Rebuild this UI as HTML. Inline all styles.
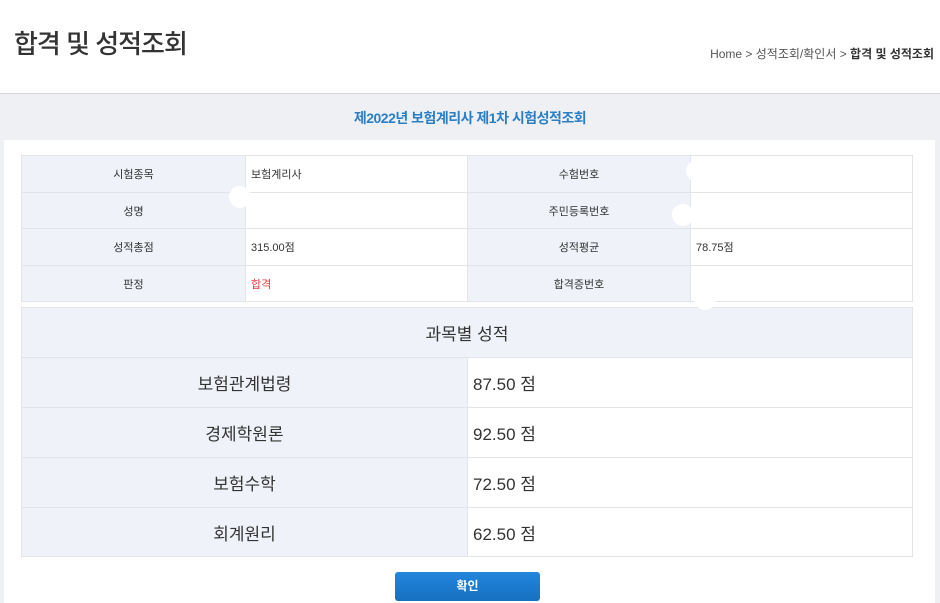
<!DOCTYPE html>
<html><head><meta charset="utf-8"><style>
*{margin:0;padding:0;box-sizing:border-box}
body{width:940px;height:603px;overflow:hidden;background:#fff;font-family:"Liberation Sans","Noto Sans CJK KR",sans-serif;color:#333;position:relative}
.a{position:absolute}
h1{position:absolute;left:14px;top:24px;font-size:26px;font-weight:500;color:#333;letter-spacing:-1px}
.bc{position:absolute;right:6px;top:45px;font-size:12px;color:#555}
.band{position:absolute;left:0;top:93px;width:940px;height:510px;background:#eef0f3;border-top:1px solid #d8d8d8}
.title{position:absolute;left:0;width:940px;top:108px;text-align:center;font-size:14px;font-weight:bold;color:#2a7fc6;letter-spacing:-0.5px}
.panel{position:absolute;left:4px;top:140px;width:931px;height:463px;background:#fff}
table{border-collapse:collapse;position:absolute;left:21px;width:892px}
td{border:1px solid #e2e4e8;font-size:11px}
td.l{background:#eff2f8;text-align:center}
td.v{padding-left:5px;background:#fff}
.t2 td{font-size:17px}
.t2 td.l{font-size:17px}
.btn{position:absolute;left:395px;top:572px;width:145px;height:29px;background:linear-gradient(#2486dc,#1570c0);border-radius:3px;color:#fff;font-size:12px;font-weight:bold;text-align:center;line-height:29px}
.dot{position:absolute;width:22px;height:22px;border-radius:50%;background:#fff}
</style></head><body>
<h1>합격 및 성적조회</h1>
<div class="bc">Home &gt; 성적조회/확인서 &gt; <b style="color:#333">합격 및 성적조회</b></div>
<div class="band"></div>
<div class="title">제2022년 보험계리사 제1차 시험성적조회</div>
<div class="panel"></div>
<table style="top:155px">
<tr style="height:37px"><td class="l" style="width:224px">시험종목</td><td class="v" style="width:222px">보험계리사</td><td class="l" style="width:223px">수험번호</td><td class="v"></td></tr>
<tr style="height:36px"><td class="l">성명</td><td class="v"></td><td class="l">주민등록번호</td><td class="v"></td></tr>
<tr style="height:37px"><td class="l">성적총점</td><td class="v">315.00점</td><td class="l">성적평균</td><td class="v">78.75점</td></tr>
<tr style="height:36px"><td class="l">판정</td><td class="v" style="color:#e0383e">합격</td><td class="l">합격증번호</td><td class="v"></td></tr>
</table>
<table class="t2" style="top:307px">
<tr style="height:50px"><td class="l" colspan="2">과목별 성적</td></tr>
<tr style="height:50px"><td class="l" style="width:446px">보험관계법령</td><td class="v">87.50 점</td></tr>
<tr style="height:50px"><td class="l">경제학원론</td><td class="v">92.50 점</td></tr>
<tr style="height:50px"><td class="l">보험수학</td><td class="v">72.50 점</td></tr>
<tr style="height:49px"><td class="l">회계원리</td><td class="v">62.50 점</td></tr>
</table>
<div class="dot" style="left:229px;top:186px"></div>
<div class="dot" style="left:686px;top:160px"></div>
<div class="dot" style="left:672px;top:204px"></div>
<div class="dot" style="left:694px;top:288px"></div>
<div class="btn">확인</div>
</body></html>
